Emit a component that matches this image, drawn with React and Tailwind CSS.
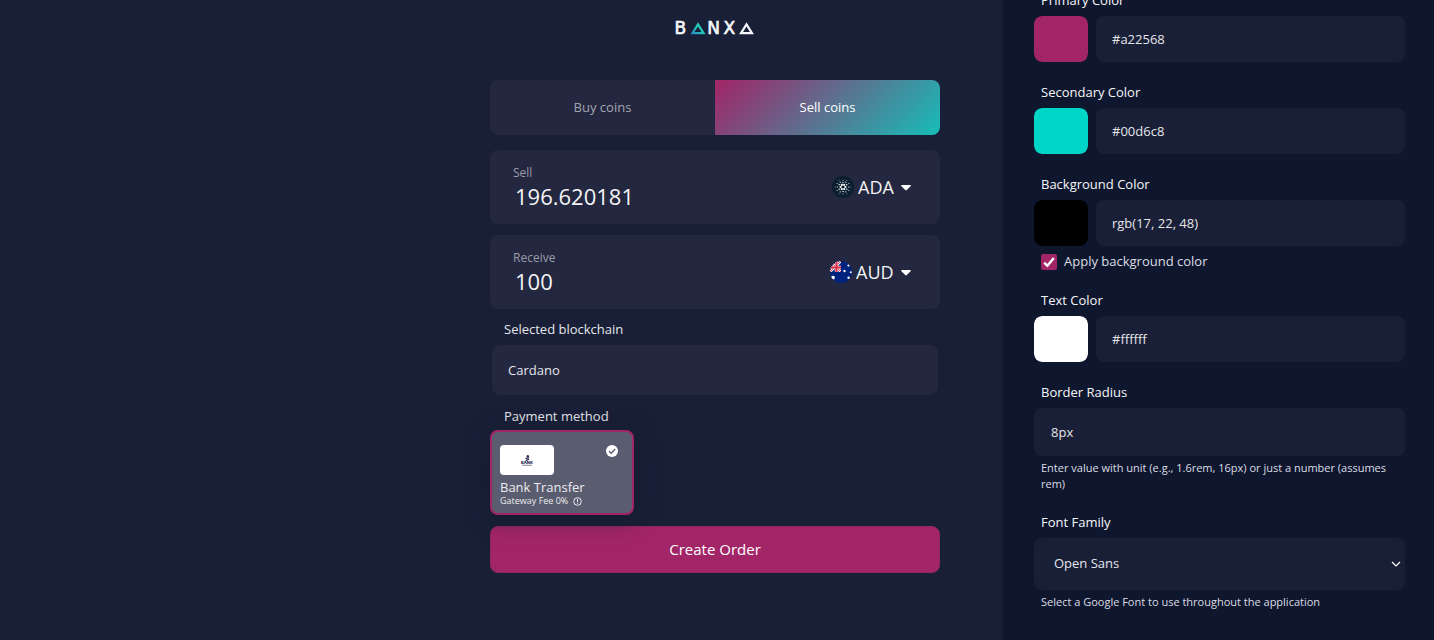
import { useState } from 'react';

const BanxaLogo = () => (
  <svg width="84" height="24" viewBox="0 0 84 24" role="img" aria-label="Banxa">
    <defs>
      <linearGradient id="banxa-a" x1="0" y1="1" x2="1" y2="0">
        <stop offset="0" stopColor="#2b8fc0" />
        <stop offset="0.5" stopColor="#1fc4b8" />
        <stop offset="1" stopColor="#35d6c0" />
      </linearGradient>
    </defs>
    <g fill="#f4f5f8" stroke="#f4f5f8" strokeWidth="0.7" fontFamily="'DejaVu Sans', sans-serif" fontSize="17">
      <text x="1.5" y="18">B</text>
      <text x="34.3" y="18">N</text>
      <text x="50.5" y="18">X</text>
    </g>
    <path d="M25 8.4 L19.5 17.1 H30.5 Z" fill="none" stroke="url(#banxa-a)" strokeWidth="2.2" />
    <path d="M73.5 8.4 L68 17.1 H79 Z" fill="none" stroke="#f4f5f8" strokeWidth="2.2" />
  </svg>
);

const AdaIcon = () => {
  const ring = (radius, size, offset) =>
    [0, 1, 2, 3, 4, 5].map((i) => {
      const angle = ((i * 60 + offset) * Math.PI) / 180;
      return (
        <circle
          key={`${radius}-${i}`}
          cx={11 + radius * Math.cos(angle)}
          cy={11 + radius * Math.sin(angle)}
          r={size}
        />
      );
    });

  return (
    <svg width="22" height="22" viewBox="0 0 22 22" aria-hidden="true">
      <circle cx="11" cy="11" r="11" fill="#0b1e30" />
      <g fill="#fff">
        {ring(2.4, 1.1, 0)}
        {ring(4.4, 0.7, 30)}
        {ring(5.6, 0.6, 0)}
        {ring(6.8, 0.5, 30)}
        {ring(7.9, 0.45, 0)}
      </g>
    </svg>
  );
};

const AudIcon = () => (
  <svg width="22" height="22" viewBox="0 0 22 22" aria-hidden="true">
    <defs>
      <clipPath id="aud-round">
        <circle cx="11" cy="11" r="11" />
      </clipPath>
      <clipPath id="aud-jack">
        <rect width="11" height="11" />
      </clipPath>
    </defs>
    <g clipPath="url(#aud-round)">
      <rect width="22" height="22" fill="#00247d" />
      <g clipPath="url(#aud-jack)">
        <path d="M0 0 L11 11 M11 0 L0 11" stroke="#fff" strokeWidth="2.4" />
        <path d="M0 0 L11 11 M11 0 L0 11" stroke="#d8324f" strokeWidth="1" />
        <path d="M6.5 0 V11 M0 6.5 H11" stroke="#f3c9d3" strokeWidth="3.4" />
        <path d="M6.5 0 V11 M0 6.5 H11" stroke="#d8324f" strokeWidth="2" />
      </g>
      <g fill="#fff">
        <circle cx="3" cy="16.6" r="1.9" />
        <circle cx="14.5" cy="10" r="1.2" />
        <circle cx="18.5" cy="4.5" r="1.1" />
        <circle cx="20.8" cy="11.2" r="1" />
        <circle cx="18.6" cy="16.8" r="1.2" />
      </g>
    </g>
  </svg>
);

const AmountCard = ({ id, label, value, onChange, icon, currency }) => (
  <div className="flex h-[74px] items-center rounded-lg bg-[#23273f] pr-7 pl-[23px]">
    <div className="min-w-0 flex-1">
      <label htmlFor={id} className="block text-xs leading-4 text-[#9a9ca9]">
        {label}
      </label>
      <input
        id={id}
        value={value}
        onChange={(e) => onChange(e.target.value)}
        className="mt-px block h-7 w-full bg-transparent px-0.5 text-[22px] leading-7 text-[#f4f4f6] outline-none"
      />
    </div>
    <div className="flex items-center">
      {icon}
      <select
        aria-label={`${label} currency`}
        className="ml-1 appearance-none bg-transparent text-lg leading-6 text-[#f4f4f6] outline-none"
      >
        <option>{currency}</option>
      </select>
      <svg width="12" height="6" viewBox="0 0 12 6" className="mt-0.5 ml-1.5" aria-hidden="true">
        <path d="M2 0 H10 Q11.4 0 10.6 1.2 L7 4.8 Q6 5.8 5 4.8 L1.4 1.2 Q0.6 0 2 0 Z" fill="#fff" />
      </svg>
    </div>
  </div>
);

const BankLogo = () => (
  <svg width="54" height="30" viewBox="0 0 54 30" className="rounded-sm bg-white" aria-hidden="true">
    <g fill="#25274d">
      <circle cx="27.8" cy="11.2" r="1.2" />
      <path d="M25 13 L28.8 12.2 L29.6 13 L26 14.2 Z" />
      <path d="M25.2 15.4 L28.6 13.6 L29.4 14.8 L26.4 16 Z" />
      <text x="27" y="19.2" textAnchor="middle" fontFamily="Inter, sans-serif" fontSize="4" fontWeight="800">
        BANK
      </text>
      <rect x="22" y="19.8" width="10" height="0.8" opacity="0.7" />
    </g>
  </svg>
);

const PaymentCard = () => (
  <label className="relative mt-1 flex h-[85px] w-36 items-start justify-between rounded-lg border-2 border-[#a22568] bg-[#5a5c6f] pt-[13px] pr-3.5 pl-2 shadow-[0_4px_24px_rgba(22,24,40,0.5)]">
    <input type="radio" name="payment" defaultChecked className="sr-only" />
    <span className="block">
      <BankLogo />
      <span className="mt-1 block text-[13px] leading-4 text-[#ececf0]">Bank Transfer</span>
      <span className="flex items-center gap-[5px] text-[9px] leading-3 text-[#ececf0]">
        Gateway Fee 0%
        <svg width="9" height="9" viewBox="0 0 9 9" fill="none" stroke="#ececf0" aria-hidden="true">
          <circle cx="4.5" cy="4.5" r="3.8" />
          <path d="M4.5 2.2 V5 M4.5 5.9 V6.8" />
        </svg>
      </span>
    </span>
    <svg width="12" height="12" viewBox="0 0 12 12" aria-hidden="true">
      <circle cx="6" cy="6" r="6" fill="#fff" />
      <path d="M3 6.2 L5.2 8.3 L9.2 4" fill="none" stroke="#5a5c6f" strokeWidth="1.3" />
    </svg>
  </label>
);

const OrderForm = () => {
  const [side, setSide] = useState('sell');
  const [sell, setSell] = useState('196.620181');
  const [receive, setReceive] = useState('100');

  const active = 'bg-[linear-gradient(135deg,#a22568,#17bdb8)] font-medium text-white';
  const inactive = 'bg-[#23273f] text-[#a3a5b1]';

  return (
    <div className="w-[450px]">
      <div className="flex justify-center pt-4">
        <BanxaLogo />
      </div>

      <div className="mt-10 grid grid-cols-2 overflow-hidden rounded-lg text-[13px]">
        <button
          onClick={() => setSide('buy')}
          className={`h-[55px] ${side === 'buy' ? active : inactive}`}
        >
          Buy coins
        </button>
        <button
          onClick={() => setSide('sell')}
          className={`h-[55px] ${side === 'sell' ? active : inactive}`}
        >
          Sell coins
        </button>
      </div>

      <div className="mt-[15px] flex flex-col gap-[11px]">
        <AmountCard id="sell" label="Sell" value={sell} onChange={setSell} icon={<AdaIcon />} currency="ADA" />
        <AmountCard id="receive" label="Receive" value={receive} onChange={setReceive} icon={<AudIcon />} currency="AUD" />
      </div>

      <label htmlFor="blockchain" className="mt-2.5 block pl-3.5 text-[13px] leading-5 text-[#e6e6ea]">
        Selected blockchain
      </label>
      <div className="px-0.5">
        <input
          id="blockchain"
          readOnly
          value="Cardano"
          className="mt-1.5 block h-[50px] w-full rounded-lg bg-[#23273f] px-4 text-[13px] text-[#e6e6ea] outline-none"
        />
      </div>

      <p className="mt-[11px] pl-3.5 text-[13px] leading-5 text-[#e6e6ea]">Payment method</p>
      <PaymentCard />

      <button className="mt-[11px] h-[47px] w-full rounded-lg border border-[#8f2860] bg-[#a22568] text-[15px] font-medium text-white">
        Create Order
      </button>
    </div>
  );
};

const labelClass = 'block pl-[7px] text-[13px] font-medium leading-5 text-[#f6f6f8]';
const fieldClass = 'rounded-lg bg-[#181f37] text-[13px] text-[#e6e6ea] outline-none';
const helpClass = 'mt-1 pl-[7px] text-[11px] leading-4 text-[#dcdde3]';

const ColorField = ({ id, label, swatch, value, children }) => {
  const [text, setText] = useState(value);
  const [color, setColor] = useState(swatch);

  const handlePick = (e) => {
    setColor(e.target.value);
    setText(e.target.value);
  };

  return (
    <div>
      <label htmlFor={id} className={labelClass}>{label}</label>
      <div className="mt-1.5 flex gap-2">
        <input
          type="color"
          aria-label={`${label} picker`}
          value={color}
          onChange={handlePick}
          className="h-[46px] w-[54px] shrink-0 appearance-none rounded-lg bg-transparent [&::-webkit-color-swatch]:rounded-lg [&::-webkit-color-swatch]:border-none [&::-webkit-color-swatch-wrapper]:p-0"
        />
        <input
          id={id}
          value={text}
          onChange={(e) => setText(e.target.value)}
          className={`h-[46px] min-w-0 flex-1 px-4 ${fieldClass}`}
        />
      </div>
      {children}
    </div>
  );
};

const ThemePanel = () => {
  const [applyBackground, setApplyBackground] = useState(true);
  const [radius, setRadius] = useState('8px');

  return (
    <aside className="h-screen w-[431px] shrink-0 overflow-hidden bg-[#0f172f] pr-[29px] pl-[31px]">
      <div className="-mt-2.5 flex flex-col gap-5">
        <ColorField id="primary" label="Primary Color" swatch="#a22568" value="#a22568" />
        <ColorField id="secondary" label="Secondary Color" swatch="#00d6c8" value="#00d6c8" />
        <ColorField id="background" label="Background Color" swatch="#000000" value="rgb(17, 22, 48)">
          <label className="mt-[7px] flex h-[17px] items-center gap-[7px] pl-[7px] text-[13px] text-[#dcdde3]">
            <span className="grid place-items-center">
              <input
                type="checkbox"
                checked={applyBackground}
                onChange={(e) => setApplyBackground(e.target.checked)}
                className="peer col-start-1 row-start-1 size-4 appearance-none rounded-xs bg-[#23273f] checked:bg-[#a22568]"
              />
              <svg
                width="12"
                height="12"
                viewBox="0 0 12 12"
                className="pointer-events-none invisible col-start-1 row-start-1 peer-checked:visible"
                aria-hidden="true"
              >
                <path d="M1.2 6.6 L4.4 9.8 L10.8 2" fill="none" stroke="#fff" strokeWidth="2.4" />
              </svg>
            </span>
            Apply background color
          </label>
        </ColorField>
        <ColorField id="text" label="Text Color" swatch="#ffffff" value="#ffffff" />

        <div>
          <label htmlFor="radius" className={labelClass}>Border Radius</label>
          <input
            id="radius"
            value={radius}
            onChange={(e) => setRadius(e.target.value)}
            className={`mt-1.5 block h-12 w-full px-[17px] ${fieldClass}`}
          />
          <p className={helpClass}>
            Enter value with unit (e.g., 1.6rem, 16px) or just a number (assumes rem)
          </p>
        </div>

        <div>
          <label htmlFor="font" className={labelClass}>Font Family</label>
          <div className={`mt-1.5 grid items-center ${fieldClass}`}>
            <select
              id="font"
              className="col-start-1 row-start-1 h-[52px] w-full appearance-none bg-transparent px-5 outline-none"
            >
              <option>Open Sans</option>
            </select>
            <svg
              width="10"
              height="6"
              viewBox="0 0 10 6"
              className="pointer-events-none col-start-1 row-start-1 mr-1 justify-self-end"
              aria-hidden="true"
            >
              <path d="M1 1 L5 5 L9 1" fill="none" stroke="#fff" strokeWidth="1.2" />
            </svg>
          </div>
          <p className={helpClass}>Select a Google Font to use throughout the application</p>
        </div>
      </div>
    </aside>
  );
};

export default function App() {
  return (
    <div className="flex min-h-screen bg-[#181f37] font-['Open_Sans','Noto_Sans',sans-serif]">
      <main className="flex flex-1 justify-end pr-[63px]">
        <OrderForm />
      </main>
      <ThemePanel />
    </div>
  );
}
